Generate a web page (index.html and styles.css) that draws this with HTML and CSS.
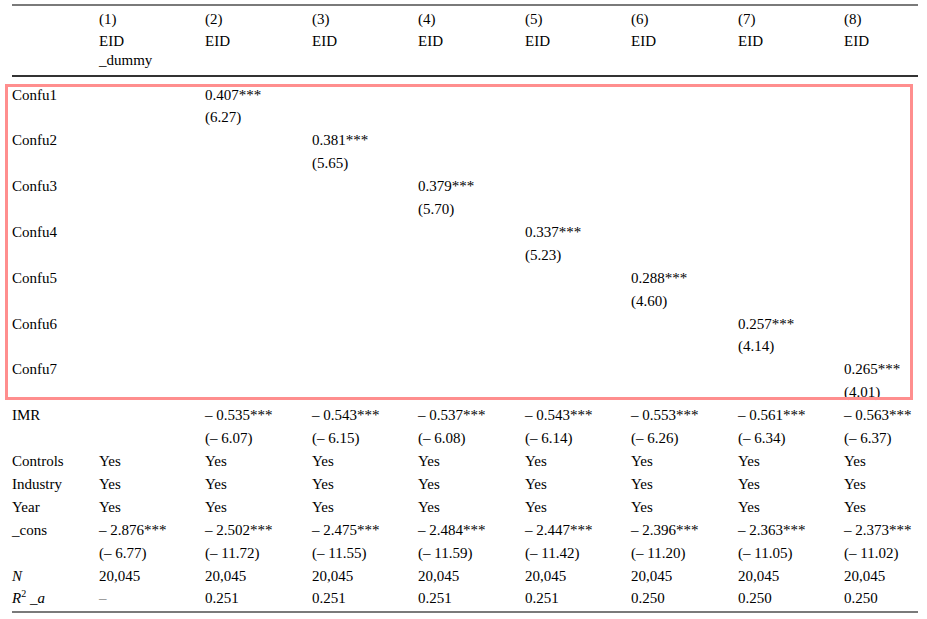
FILE: index.html
```html
<!DOCTYPE html>
<html>
<head>
<meta charset="utf-8">
<link rel="stylesheet" href="styles.css">
</head>
<body>
<div class="wrap">
<table class="reg">
<colgroup>
<col class="c-lab"><col class="c-a"><col class="c-b"><col class="c-a"><col class="c-b"><col class="c-a"><col class="c-b"><col class="c-a"><col class="c-last">
</colgroup>
<thead>
<tr class="h1"><th></th><th>(1)</th><th>(2)</th><th>(3)</th><th>(4)</th><th>(5)</th><th>(6)</th><th>(7)</th><th>(8)</th></tr>
<tr class="h2"><th></th><th><span class="l1">EID</span><span class="l2">_dummy</span></th><th><span class="l1">EID</span><span class="l2">&nbsp;</span></th><th><span class="l1">EID</span></th><th><span class="l1">EID</span></th><th><span class="l1">EID</span></th><th><span class="l1">EID</span></th><th><span class="l1">EID</span></th><th><span class="l1">EID</span></th></tr>
</thead>
<tbody>
<tr class="first"><td>Confu1</td><td></td><td>0.407***</td><td></td><td></td><td></td><td></td><td></td><td></td></tr>
<tr><td></td><td></td><td>(6.27)</td><td></td><td></td><td></td><td></td><td></td><td></td></tr>
<tr><td>Confu2</td><td></td><td></td><td>0.381***</td><td></td><td></td><td></td><td></td><td></td></tr>
<tr><td></td><td></td><td></td><td>(5.65)</td><td></td><td></td><td></td><td></td><td></td></tr>
<tr><td>Confu3</td><td></td><td></td><td></td><td>0.379***</td><td></td><td></td><td></td><td></td></tr>
<tr><td></td><td></td><td></td><td></td><td>(5.70)</td><td></td><td></td><td></td><td></td></tr>
<tr><td>Confu4</td><td></td><td></td><td></td><td></td><td>0.337***</td><td></td><td></td><td></td></tr>
<tr><td></td><td></td><td></td><td></td><td></td><td>(5.23)</td><td></td><td></td><td></td></tr>
<tr><td>Confu5</td><td></td><td></td><td></td><td></td><td></td><td>0.288***</td><td></td><td></td></tr>
<tr><td></td><td></td><td></td><td></td><td></td><td></td><td>(4.60)</td><td></td><td></td></tr>
<tr><td>Confu6</td><td></td><td></td><td></td><td></td><td></td><td></td><td>0.257***</td><td></td></tr>
<tr><td></td><td></td><td></td><td></td><td></td><td></td><td></td><td>(4.14)</td><td></td></tr>
<tr><td>Confu7</td><td></td><td></td><td></td><td></td><td></td><td></td><td></td><td>0.265***</td></tr>
<tr><td></td><td></td><td></td><td></td><td></td><td></td><td></td><td></td><td>(4.01)</td></tr>
<tr><td>IMR</td><td></td><td>– 0.535***</td><td>– 0.543***</td><td>– 0.537***</td><td>– 0.543***</td><td>– 0.553***</td><td>– 0.561***</td><td>– 0.563***</td></tr>
<tr><td></td><td></td><td>(– 6.07)</td><td>(– 6.15)</td><td>(– 6.08)</td><td>(– 6.14)</td><td>(– 6.26)</td><td>(– 6.34)</td><td>(– 6.37)</td></tr>
<tr><td>Controls</td><td>Yes</td><td>Yes</td><td>Yes</td><td>Yes</td><td>Yes</td><td>Yes</td><td>Yes</td><td>Yes</td></tr>
<tr><td>Industry</td><td>Yes</td><td>Yes</td><td>Yes</td><td>Yes</td><td>Yes</td><td>Yes</td><td>Yes</td><td>Yes</td></tr>
<tr><td>Year</td><td>Yes</td><td>Yes</td><td>Yes</td><td>Yes</td><td>Yes</td><td>Yes</td><td>Yes</td><td>Yes</td></tr>
<tr><td>_cons</td><td>– 2.876***</td><td>– 2.502***</td><td>– 2.475***</td><td>– 2.484***</td><td>– 2.447***</td><td>– 2.396***</td><td>– 2.363***</td><td>– 2.373***</td></tr>
<tr><td></td><td>(– 6.77)</td><td>(– 11.72)</td><td>(– 11.55)</td><td>(– 11.59)</td><td>(– 11.42)</td><td>(– 11.20)</td><td>(– 11.05)</td><td>(– 11.02)</td></tr>
<tr><td><i>N</i></td><td>20,045</td><td>20,045</td><td>20,045</td><td>20,045</td><td>20,045</td><td>20,045</td><td>20,045</td><td>20,045</td></tr>
<tr class="last"><td><i>R</i><sup>2</sup> <i>_a</i></td><td class="dash">–</td><td>0.251</td><td>0.251</td><td>0.251</td><td>0.251</td><td>0.250</td><td>0.250</td><td>0.250</td></tr>
</tbody>
</table>
<div class="highlight"></div>
</div>
</body>
</html>
```

FILE: styles.css
```css
html, body {
  margin: 0;
  padding: 0;
  background: #ffffff;
}
body {
  font-family: "Liberation Serif", "Times New Roman", serif;
  font-size: 15px;
  color: #000000;
}
.wrap {
  position: relative;
  margin: 4px 0 0 12px;
  width: 906px;
}
.reg {
  border-collapse: separate;
  border-spacing: 0;
  table-layout: fixed;
  width: 906px;
}
.c-lab { width: 87px; }
.c-a { width: 106px; }
.c-b { width: 107px; }
.c-last { width: 74px; }
.reg th, .reg td {
  padding: 0;
  text-align: left;
  vertical-align: top;
  font-weight: normal;
  white-space: nowrap;
}
.h1 th {
  border-top: 2px solid #7a7a7a;
  padding-top: 2px;
  line-height: 23px;
}
.h2 th {
  border-bottom: 2px solid #333333;
  padding-bottom: 6px;
}
.h2 .l1 {
  display: block;
  line-height: 21px;
}
.h2 .l2 {
  display: block;
  line-height: 17px;
}
.reg td {
  line-height: 22.9px;
}
.first td {
  padding-top: 6.5px;
}
.last td {
  border-bottom: 2px solid #7a7a7a;
  padding-bottom: 1px;
}
sup {
  font-size: 10px;
  line-height: 0;
  vertical-align: 6px;
}
.dash {
  color: #888888;
}
.highlight {
  position: absolute;
  left: -7px;
  top: 80px;
  width: 902px;
  height: 310px;
  border: 3px solid #ff8e8e;
  pointer-events: none;
}
```
